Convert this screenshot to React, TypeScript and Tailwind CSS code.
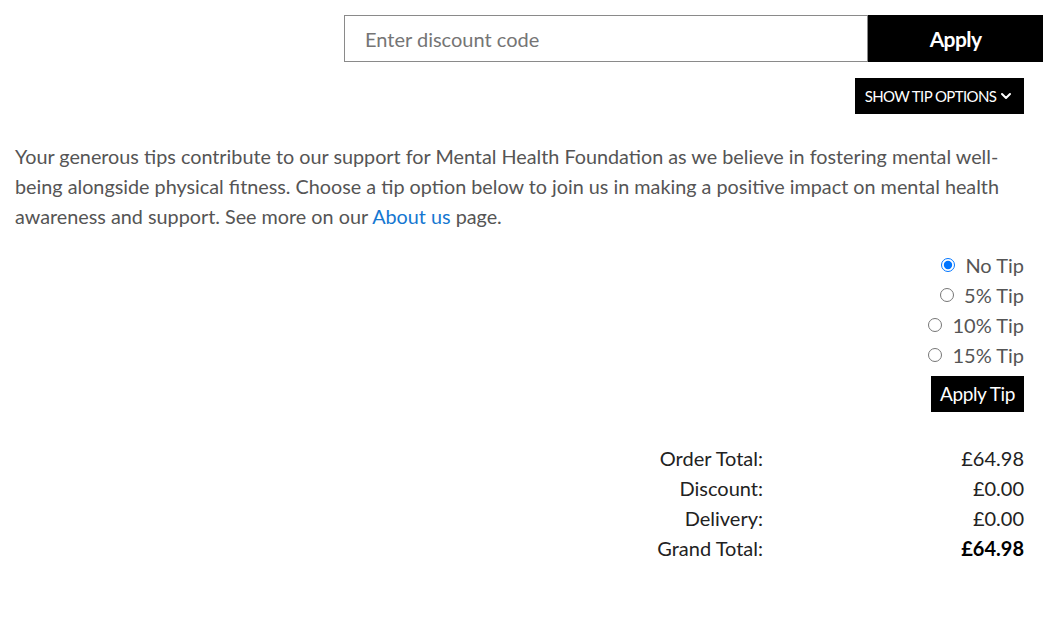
import { ChevronDown } from "lucide-react";

const tips = ["No Tip", "5% Tip", "10% Tip", "15% Tip"];

const totals = [
  { label: "Order Total:", value: "£64.98" },
  { label: "Discount:", value: "£0.00" },
  { label: "Delivery:", value: "£0.00" },
  { label: "Grand Total:", value: "£64.98", bold: true },
];

export default function App() {
  return (
    <main className="min-h-screen bg-white font-['Lato','Noto_Sans',sans-serif] text-[20px] text-[#555]">
      {/* discount code */}
      <div className="flex justify-end pt-[15px] pr-[18px]">
        <input
          type="text"
          placeholder="Enter discount code"
          className="h-[47px] w-[524px] border border-[#8a8a8a] px-5 text-[20px] text-[#333] placeholder:text-[#757575] outline-none"
        />
        <button className="h-[47px] w-[175px] bg-black text-[21px] font-bold tracking-[-0.6px] text-white">
          Apply
        </button>
      </div>

      <div className="pl-[15px] pr-[37px]">
        {/* tip toggle */}
        <div className="mt-4 flex justify-end">
          <button className="flex h-9 w-[169px] items-center justify-center gap-[2px] bg-black text-[15px] tracking-[-0.6px] text-white">
            SHOW TIP OPTIONS
            <ChevronDown className="h-4 w-4" strokeWidth={3} />
          </button>
        </div>

        <p className="mt-[27px] text-[19.8px] leading-[30px]">
          Your generous tips contribute to our support for Mental Health Foundation as we believe in fostering mental well-being alongside physical fitness. Choose a tip option below to join us in making a positive impact on mental health awareness and support. See more on our{" "}
          <a href="#" className="text-[#1577d1]">About us</a> page.
        </p>

        {/* tip options */}
        <div className="mt-[19px] flex flex-col items-end">
          {tips.map((t, i) => (
            <label key={t} className="flex h-[30px] items-center gap-[10px] leading-[30px]">
              <input
                type="radio"
                name="tip"
                defaultChecked={i === 0}
                className="h-[14px] w-[14px] accent-[#0075ff]"
              />
              {t}
            </label>
          ))}
          <button className="mt-[6px] h-9 w-[93px] bg-black text-[19px] tracking-[-0.4px] text-white">
            Apply Tip
          </button>
        </div>

        {/* totals */}
        <div className="mt-[31px] flex justify-end text-[#222]">
          <table className="border-collapse">
            <tbody>
              {totals.map((r) => (
                <tr key={r.label} className="h-[30px]">
                  <td className="p-0 text-right leading-[30px]">{r.label}</td>
                  <td className={`w-[261px] p-0 text-right leading-[30px] ${r.bold ? "font-bold text-black" : ""}`}>
                    {r.value}
                  </td>
                </tr>
              ))}
            </tbody>
          </table>
        </div>
      </div>
    </main>
  );
}
